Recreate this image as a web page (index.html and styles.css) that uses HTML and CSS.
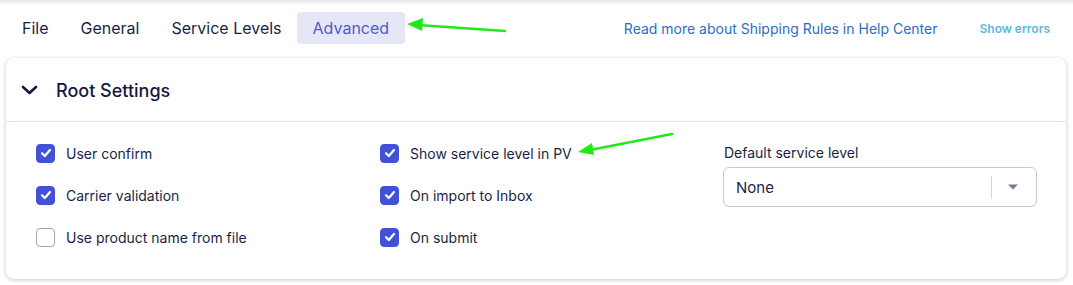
FILE: index.html
```html
<!DOCTYPE html>
<html>
<head>
<meta charset="utf-8">
<link rel="stylesheet" href="styles.css">
</head>
<body>
<div class="page">
  <div class="topshadow"></div>
  <header class="header">
    <nav class="tabs">
      <span class="tab">File</span>
      <span class="tab">General</span>
      <span class="tab">Service Levels</span>
      <span class="tab active">Advanced</span>
    </nav>
    <div class="links">
      <a class="help">Read more about Shipping Rules in Help Center</a>
      <a class="errors">Show errors</a>
    </div>
  </header>
  <section class="card">
    <div class="card-head">
      <svg class="chev" width="17" height="10" viewBox="0 0 17 10"><path d="M2 2 L8.5 8 L15 2" fill="none" stroke="#141a3f" stroke-width="2.6" stroke-linecap="round" stroke-linejoin="round"/></svg>
      <h2 class="title">Root Settings</h2>
    </div>
    <div class="card-body">
      <div class="col">
        <label class="check"><span class="box on"><svg width="12" height="10" viewBox="0 0 12 10"><path d="M2 5.2 L4.8 8 L10 2" fill="none" stroke="#fff" stroke-width="2.2" stroke-linecap="round" stroke-linejoin="round"/></svg></span>User confirm</label>
        <label class="check"><span class="box on"><svg width="12" height="10" viewBox="0 0 12 10"><path d="M2 5.2 L4.8 8 L10 2" fill="none" stroke="#fff" stroke-width="2.2" stroke-linecap="round" stroke-linejoin="round"/></svg></span>Carrier validation</label>
        <label class="check"><span class="box"></span>Use product name from file</label>
      </div>
      <div class="col">
        <label class="check"><span class="box on"><svg width="12" height="10" viewBox="0 0 12 10"><path d="M2 5.2 L4.8 8 L10 2" fill="none" stroke="#fff" stroke-width="2.2" stroke-linecap="round" stroke-linejoin="round"/></svg></span>Show service level in PV</label>
        <label class="check"><span class="box on"><svg width="12" height="10" viewBox="0 0 12 10"><path d="M2 5.2 L4.8 8 L10 2" fill="none" stroke="#fff" stroke-width="2.2" stroke-linecap="round" stroke-linejoin="round"/></svg></span>On import to Inbox</label>
        <label class="check"><span class="box on"><svg width="12" height="10" viewBox="0 0 12 10"><path d="M2 5.2 L4.8 8 L10 2" fill="none" stroke="#fff" stroke-width="2.2" stroke-linecap="round" stroke-linejoin="round"/></svg></span>On submit</label>
      </div>
      <div class="col field">
        <div class="field-label">Default service level</div>
        <div class="select">
          <span class="value">None</span>
          <span class="sep"></span>
          <svg class="caret" width="12" height="6" viewBox="0 0 12 6"><path d="M1 0.5 L11 0.5 L6 5.5 Z" fill="#787b90"/></svg>
        </div>
      </div>
    </div>
  </section>
  <svg class="arrows" width="1073" height="285" viewBox="0 0 1073 285">
    <path d="M505 31 L418 25" stroke="#22e81c" stroke-width="2.6" stroke-linecap="round"/>
    <path d="M407 24 L423 18 L422 31 Z" fill="#22e81c"/>
    <path d="M672 134 L590 150" stroke="#22e81c" stroke-width="2.6" stroke-linecap="round"/>
    <path d="M578 152 L592 143 L594 155 Z" fill="#22e81c"/>
  </svg>
</div>
</body>
</html>
```
FILE: styles.css
```css
* { box-sizing: border-box; }
html, body { margin: 0; padding: 0; background: #fff; }
body {
  font-family: Inter, "Noto Sans", "Liberation Sans", sans-serif;
  color: #1b1f45;
  width: 1073px;
  height: 285px;
  overflow: hidden;
}
.page { position: relative; padding: 0 7px 0 6px; height: 285px; }
.topshadow {
  position: absolute; left: 0; right: 0; top: 0; height: 5px;
  background: linear-gradient(#e4e4e6, rgba(255,255,255,0));
}
.header {
  display: flex; align-items: center; justify-content: space-between;
  height: 58px; padding-top: 12px; padding-bottom: 14px;
}
.tabs { display: flex; }
.tab {
  font-size: 16px; line-height: 20px; padding: 6px 16px;
  border-radius: 4px; color: #1b1f45;
}
.tab.active { background: #e6e7f6; color: #5559c9; padding: 6px 16px; margin-left: -1px; }
.links { display: flex; align-items: center; padding-right: 16px; }
.help { font-size: 14px; color: #2f6cc6; margin-right: 42px; }
.errors { font-size: 12px; font-weight: 600; color: #5cb9e2; }
.card {
  background: #fff; border-radius: 8px;
  box-shadow: 0 1px 4px rgba(0,0,0,0.22);
  height: 221px;
}
.card-head {
  display: flex; align-items: center; height: 64px; padding-left: 15px; padding-top: 1px;
  border-bottom: 1px solid #e2e2e8;
}
.chev { display: block; margin-right: 18px; }
.title { margin: 0; font-size: 18px; font-weight: 500; color: #141a3f; }
.card-body {
  display: grid; grid-template-columns: 344px 343px 314px;
  padding: 10px 29px 0 30px;
}
.col { display: flex; flex-direction: column; }
.check {
  display: flex; align-items: center; height: 42px;
  font-size: 14px; color: #1b1f45;
}
.box {
  width: 19px; height: 19px; border-radius: 4px; margin-right: 11px;
  border: 1.5px solid #a3a5b9; background: #fff;
  display: flex; align-items: center; justify-content: center;
}
.box.on { background: #4152d9; border-color: #4152d9; }
.field { padding-top: 11px; }
.field-label { font-size: 14px; line-height: 20px; margin-bottom: 4px; padding-left: 1px; }
.select {
  height: 40px; border: 1px solid #c9cad8; border-radius: 6px;
  display: flex; align-items: center; padding-left: 12px;
}
.value { font-size: 15px; flex: 1; color: #1b1f45; }
.sep { width: 1px; height: 23px; background: #d2d3dd; margin-right: 15px; }
.caret { margin-right: 17px; }
.arrows { position: absolute; left: 0; top: 0; pointer-events: none; }
```
